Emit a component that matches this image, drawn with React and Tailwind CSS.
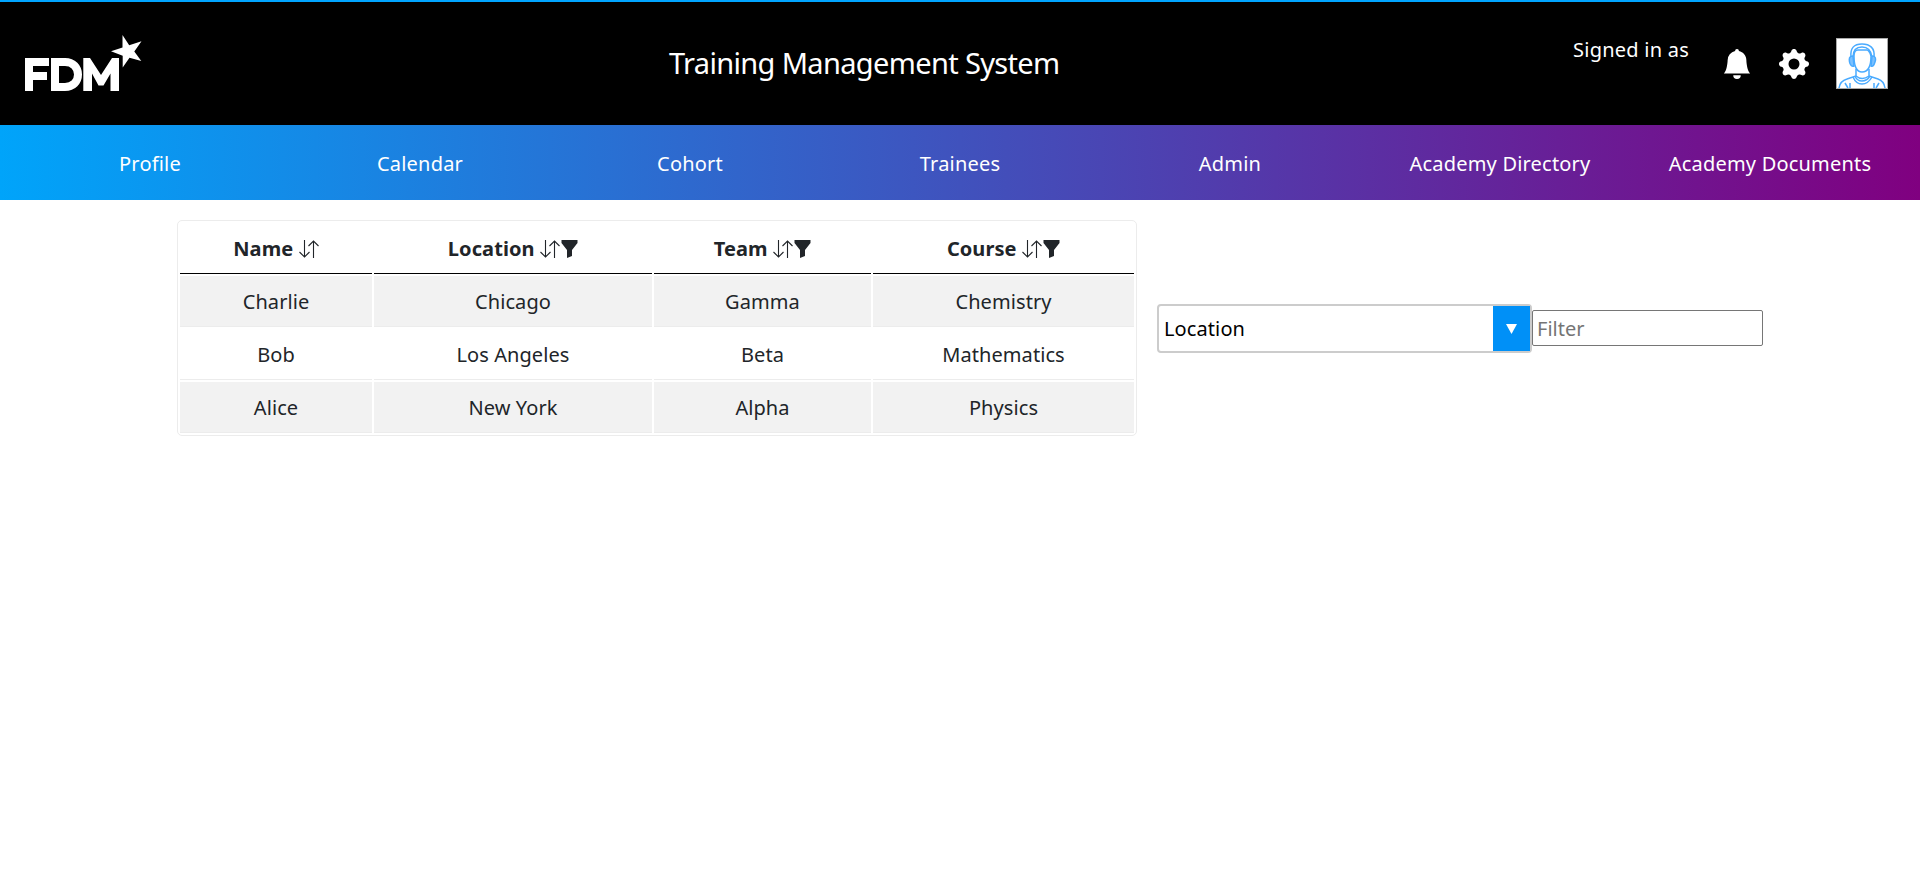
import React from "react";
import { BsBellFill, BsGearFill } from "react-icons/bs";

const NAV = ["Profile", "Calendar", "Cohort", "Trainees", "Admin", "Academy Directory", "Academy Documents"];
const COLUMNS = [
  { label: "Name", filter: false },
  { label: "Location", filter: true },
  { label: "Team", filter: true },
  { label: "Course", filter: true },
];
const ROWS = [
  ["Charlie", "Chicago", "Gamma", "Chemistry"],
  ["Bob", "Los Angeles", "Beta", "Mathematics"],
  ["Alice", "New York", "Alpha", "Physics"],
];

function Logo() {
  return (
    <svg className="ml-[25px] mt-[33px] h-[57px] w-[117px] shrink-0" viewBox="25 35 117 57" fill="none" role="img" aria-label="FDM">
      <g stroke="white" strokeWidth="8">
        <path d="M29 91V62H49M32 76H47" />
        <path d="M55 62V87H65C73 87 78 81.500 78 74.500S73 62 65 62Z" />
      </g>
      <path d="M83.300 91V58H90L101 75L112 58H119V91H110.500V73.500L103.500 85.500H98.500L92 73.500V91Z" fill="white" />
      <path d="M122.500 35L129.200 45.300L141.500 41.200L134.300 51.600L141.300 61L129.500 57.700L122.700 67.500V55.700L111 51.300L122.500 47.500Z" fill="white" />
    </svg>
  );
}

function SortIcon() {
  return (
    <svg className="h-[18px] w-5 shrink-0" viewBox="0 0 20 18" fill="none" stroke="#212529" strokeWidth="1.1">
      <path d="M5.500 0V17M0.500 12L5.500 17L10.500 12M14.500 18V1M9.500 6L14.500 1L19.500 6" />
    </svg>
  );
}

function FilterIcon() {
  return (
    <svg className="ml-px h-[18px] w-[17px] shrink-0" viewBox="0 0 17 18" fill="#212529">
      <path d="M.5 0H16.500V3L11 10V16L6 18V10L.5 3Z" />
    </svg>
  );
}

function Avatar() {
  return (
    <svg className="ml-[27px] mt-9 h-[51px] w-[52px] shrink-0" viewBox="0 0 52 51" fill="none">
      <rect x=".5" y=".5" width="51" height="50" fill="white" stroke="#aaa" />
      <g stroke="#4aabff" strokeWidth="1.500">
        <path d="M18 18C18 31 22 34 26 34S35 31 35 18C34 14 32 12 31 12H22C20 12 18 14 18 18Z" />
        <path d="M15 19C14 10 18 6 26 6S39 10 38 19M17 19C17 12 20 9 26 9S35 12 36 19" />
        <path d="M17 18C13 18 13 21 13.500 24C14 27 16 29 18 28ZM36 18C40 18 40 21 39 24C38 27 37 29 35 28Z" fill="#7cc1ff" />
        <path d="M20 31V38Q26 43 33 38V31M20 38L11 41Q4 43 3 50M33 38L42 41Q48 43 49 50" />
        <path d="M17 39Q20 46 26 46T36 39M19 38Q21 43 26 43T34 38M9 45L12 50M14 45V50M43 45L40 50M38 45V50" />
      </g>
    </svg>
  );
}

export default function App() {
  return (
    <div className="min-h-[869px] w-full bg-white font-['Noto_Sans',sans-serif] text-[20px] leading-[30px] text-[#212529]">
      <header className="flex h-[125px] border-t-2 border-[#00a4ff] bg-black text-white">
        <Logo />
        <h1 className="ml-[527px] mt-[39px] w-[392px] shrink-0 whitespace-nowrap text-[29px] leading-[44px] tracking-[-0.65px]">Training Management System</h1>
        <p className="ml-[512px] mt-[33px] w-[119px] shrink-0 whitespace-nowrap tracking-[0.25px]">Signed in as</p>
        <BsBellFill className="ml-[30px] mt-[47px] size-[30px] shrink-0" />
        <BsGearFill className="ml-[27px] mt-[47px] size-[30px] shrink-0" />
        <Avatar />
      </header>
      <nav className="grid h-[75px] grid-cols-7 items-center bg-linear-to-r/srgb from-[#00a4fa] to-[#800080] px-[15px] text-center text-white">
        {NAV.map((item) => (
          <a key={item} href="#" className="whitespace-nowrap pt-0.5 tracking-[0.2px]">{item}</a>
        ))}
      </nav>
      <main className="flex items-start pl-[177px] pt-5">
        <table className="w-[960px] table-fixed border-separate border-spacing-[2px] rounded-[5px] border border-[#ececec] text-center tracking-[0.08px]">
          <colgroup>
            <col className="w-[192px]" />
            <col className="w-[278px]" />
            <col className="w-[217px]" />
            <col className="w-[261px]" />
          </colgroup>
          <thead>
            <tr>
              {COLUMNS.map((column) => (
                <th key={column.label} className="h-[51px] border-b border-black p-0 pt-0.5 font-bold">
                  <div className="flex items-center justify-center">
                    <span className="mr-[5.5px]">{column.label}</span>
                    <SortIcon />
                    {column.filter && <FilterIcon />}
                  </div>
                </th>
              ))}
            </tr>
          </thead>
          <tbody>
            {ROWS.map((row) => (
              <tr key={row[0]} className="odd:bg-[#f2f2f2]">
                {row.map((cell) => (
                  <td key={cell} className="h-[51px] border-b border-[#ececec] p-0 pt-0.5">{cell}</td>
                ))}
              </tr>
            ))}
          </tbody>
        </table>
        <div className="ml-5 mt-[84px] flex items-start">
          <button className="flex h-[49px] w-[375px] items-stretch justify-between rounded-[4px] border-2 border-[#ccc] bg-white text-black">
            <span className="self-center pl-[5px] tracking-[0.1px]">Location</span>
            <span className="flex w-[37px] items-center justify-center bg-[#0090f7]">
              <svg className="h-[10px] w-[11px]" viewBox="0 0 11 10" fill="white"><path d="M0 0H11L5.500 10Z" /></svg>
            </span>
          </button>
          <input placeholder="Filter" className="mt-1.5 h-9 w-[231px] rounded-[2px] border border-[#767676] px-1 placeholder:text-[#757575]" />
        </div>
      </main>
    </div>
  );
}
